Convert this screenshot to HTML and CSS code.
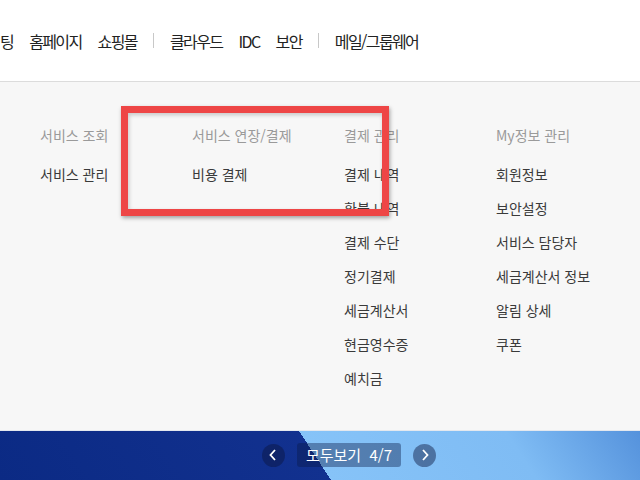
FILE: index.html
```html
<!DOCTYPE html>
<html lang="ko">

<head>
    <meta charset="UTF-8" />
    <meta name="viewport" content="width=device-width, initial-scale=1.0" />
    <title>결제 관리</title>
    <link rel="stylesheet" href="styles.css">
</head>

<body>

    <header class="topbar">
        <nav class="gnb">
            <a>팅</a>
            <a>홈페이지</a>
            <a>쇼핑몰</a>
            <span class="bar"></span>
            <a>클라우드</a>
            <a>IDC</a>
            <a>보안</a>
            <span class="bar"></span>
            <a>메일/그룹웨어</a>
        </nav>
    </header>

    <section class="menu">
        <div class="col">
            <h3>서비스 조회</h3>
            <a>서비스 관리</a>
        </div>
        <div class="col">
            <h3>서비스 연장/결제</h3>
            <a>비용 결제</a>
        </div>
        <div class="col">
            <h3>결제 관리</h3>
            <a>결제 내역</a>
            <a>환불 내역</a>
            <a>결제 수단</a>
            <a>정기결제</a>
            <a>세금계산서</a>
            <a>현금영수증</a>
            <a>예치금</a>
        </div>
        <div class="col">
            <h3>My정보 관리</h3>
            <a>회원정보</a>
            <a>보안설정</a>
            <a>서비스 담당자</a>
            <a>세금계산서 정보</a>
            <a>알림 상세</a>
            <a>쿠폰</a>
        </div>

        <!-- 강조 표시 -->
        <div class="highlight"></div>
    </section>

    <section class="banner">
        <div class="pager">
            <button class="arrow prev">
                <svg width="10" height="12" viewBox="0 0 10 12"><path d="M7 1 L2.5 6 L7 11" fill="none" stroke="#fff" stroke-width="1.8"/></svg>
            </button>
            <span class="count">모두보기 &nbsp;4/7</span>
            <button class="arrow next">
                <svg width="10" height="12" viewBox="0 0 10 12"><path d="M3 1 L7.5 6 L3 11" fill="none" stroke="#fff" stroke-width="1.8"/></svg>
            </button>
        </div>
    </section>

</body>

</html>
```

FILE: styles.css
```css
body {
    margin: 0;
    font-family: "Noto Sans CJK KR", "Noto Sans", sans-serif;
    background: #fff;
    overflow: hidden;
    height: 480px;
}

.topbar {
    height: 81px;
    border-bottom: 1px solid #dcdcdc;
    display: flex;
    align-items: center;
    overflow: hidden;
}

.gnb {
    display: flex;
    align-items: center;
    gap: 16px;
    font-size: 16px;
    letter-spacing: -1.6px;
    color: #222;
    white-space: nowrap;
}

.gnb .bar {
    width: 1px;
    height: 15px;
    background: #c8c8c8;
}

.menu {
    position: relative;
    height: 348px;
    background: #f7f7f7;
    display: grid;
    grid-template-columns: 152px 152px 152px 152px;
    padding: 0 0 0 40px;
    box-sizing: border-box;
}

.col {
    display: flex;
    flex-direction: column;
    padding-top: 42px;
    font-size: 14px;
}

.col h3 {
    margin: 0 0 17px;
    font-weight: normal;
    font-size: 14px;
    line-height: 22px;
    color: #9a9a9a;
}

.col a {
    color: #3a3a3a;
    line-height: 22px;
    margin-bottom: 12px;
}

.highlight {
    position: absolute;
    left: 121px;
    top: 24px;
    width: 268px;
    height: 110px;
    box-sizing: border-box;
    border: 7px solid #ee4646;
    box-shadow: 1px 2px 4px rgba(0, 0, 0, 0.35), inset 1px 2px 4px rgba(0, 0, 0, 0.2);
}

.banner {
    height: 50px;
    border-top: 1px solid #e4e8ee;
    background: linear-gradient(57deg, #0b2a84 0%, #12318f 49.3%, #86c3f8 49.3%, #7fbcf4 80%, #5592dc 100%);
    display: flex;
    justify-content: center;
    align-items: center;
}

.pager {
    display: flex;
    align-items: center;
    gap: 12px;
    margin-left: 58px;
    margin-top: -2px;
}

.arrow {
    width: 23px;
    height: 23px;
    border-radius: 50%;
    border: none;
    padding: 0;
    display: flex;
    align-items: center;
    justify-content: center;
    background: rgba(10, 20, 60, 0.45);
}

.count {
    height: 24px;
    padding: 0 9px;
    border-radius: 3px;
    background: rgba(10, 25, 70, 0.4);
    color: #fff;
    font-size: 15px;
    line-height: 24px;
}
```
